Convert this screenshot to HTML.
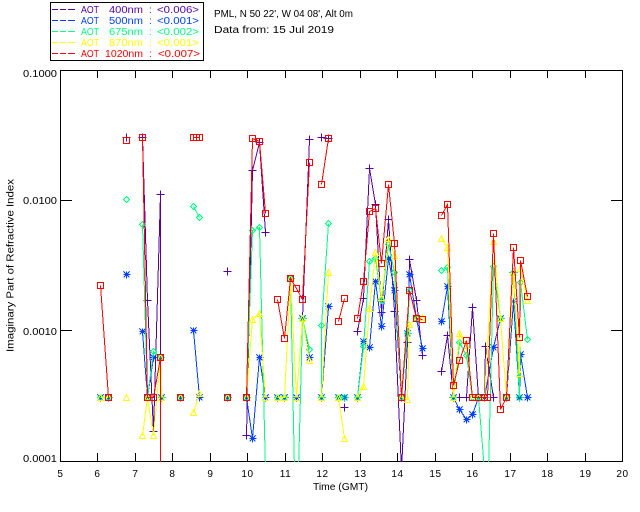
<!DOCTYPE html>
<html>
<head>
<meta charset="utf-8">
<style>
html,body{margin:0;padding:0;background:#fff;}
svg{display:block;}
text{font-family:"Liberation Sans",sans-serif;font-size:10px;fill:#000;}
.n{letter-spacing:.6px;}
</style>
</head>
<body>
<svg id="s" width="640" height="512" viewBox="0 0 640 512" xmlns="http://www.w3.org/2000/svg">
<defs><clipPath id="c"><rect x="60" y="70" width="563" height="392"/></clipPath></defs>
<rect x="0" y="0" width="640" height="512" fill="#fff"/>
<g id="axes" shape-rendering="crispEdges" stroke="#000" fill="none">
<rect x="50.5" y="2.5" width="153" height="58"/>
<rect x="60.5" y="70.5" width="562" height="391"/>
<path d="M61 200.5H72M61 330.5H72M622 200.5H611M622 330.5H611"/>
<path d="M97.5 70V78M135.5 70V78M172.5 70V78M210.5 70V78M247.5 70V78M285.5 70V78M322.5 70V78M360.5 70V78M397.5 70V78M435.5 70V78M472.5 70V78M510.5 70V78M547.5 70V78M585.5 70V78"/>
<path d="M97.5 461V453M135.5 461V453M172.5 461V453M210.5 461V453M247.5 461V453M285.5 461V453M322.5 461V453M360.5 461V453M397.5 461V453M435.5 461V453M472.5 461V453M510.5 461V453M547.5 461V453M585.5 461V453"/>
</g>
<g shape-rendering="crispEdges" fill="none">
<path d="M52 9.5H58M60 9.5H66M68 9.5H75" stroke="#5500a5"/>
<path d="M52 20.5H58M60 20.5H66M68 20.5H75" stroke="#0040ff"/>
<path d="M52 31.5H58M60 31.5H66M68 31.5H75" stroke="#00ff80"/>
<path d="M52 42.5H58M60 42.5H66M68 42.5H75" stroke="#ffff00"/>
<path d="M52 53.5H58M60 53.5H66M68 53.5H75" stroke="#ff0000"/>
</g>
<text x="81" y="13" textLength="18" lengthAdjust="spacingAndGlyphs" style="fill:#5500a5">AOT</text>
<text x="109" y="13" textLength="34" lengthAdjust="spacingAndGlyphs" style="fill:#5500a5">400nm</text>
<text x="149" y="13" style="fill:#5500a5">:</text>
<text x="157" y="13" textLength="42" lengthAdjust="spacingAndGlyphs" style="fill:#5500a5">&lt;0.006&gt;</text>
<text x="81" y="24" textLength="18" lengthAdjust="spacingAndGlyphs" style="fill:#0040ff">AOT</text>
<text x="109" y="24" textLength="34" lengthAdjust="spacingAndGlyphs" style="fill:#0040ff">500nm</text>
<text x="149" y="24" style="fill:#0040ff">:</text>
<text x="157" y="24" textLength="42" lengthAdjust="spacingAndGlyphs" style="fill:#0040ff">&lt;0.001&gt;</text>
<text x="81" y="35" textLength="18" lengthAdjust="spacingAndGlyphs" style="fill:#00ff80">AOT</text>
<text x="109" y="35" textLength="34" lengthAdjust="spacingAndGlyphs" style="fill:#00ff80">675nm</text>
<text x="149" y="35" style="fill:#00ff80">:</text>
<text x="157" y="35" textLength="42" lengthAdjust="spacingAndGlyphs" style="fill:#00ff80">&lt;0.002&gt;</text>
<text x="81" y="46" textLength="18" lengthAdjust="spacingAndGlyphs" style="fill:#ffff00">AOT</text>
<text x="109" y="46" textLength="34" lengthAdjust="spacingAndGlyphs" style="fill:#ffff00">870nm</text>
<text x="149" y="46" style="fill:#ffff00">:</text>
<text x="157" y="46" textLength="42" lengthAdjust="spacingAndGlyphs" style="fill:#ffff00">&lt;0.001&gt;</text>
<text x="81" y="57" textLength="18" lengthAdjust="spacingAndGlyphs" style="fill:#ff0000">AOT</text>
<text x="105" y="57" textLength="38" lengthAdjust="spacingAndGlyphs" style="fill:#ff0000">1020nm</text>
<text x="149" y="57" style="fill:#ff0000">:</text>
<text x="158" y="57" textLength="42" lengthAdjust="spacingAndGlyphs" style="fill:#ff0000">&lt;0.007&gt;</text>

<text x="214" y="17" textLength="139" lengthAdjust="spacingAndGlyphs">PML, N 50 22', W 04 08', Alt 0m</text>
<text x="214" y="33" textLength="120" lengthAdjust="spacingAndGlyphs">Data from: 15 Jul 2019</text>

<text x="23" y="77" textLength="34" lengthAdjust="spacingAndGlyphs">0.1000</text>
<text x="23" y="204" textLength="34" lengthAdjust="spacingAndGlyphs">0.0100</text>
<text x="23" y="335" textLength="34" lengthAdjust="spacingAndGlyphs">0.0010</text>
<text x="23" y="462" textLength="34" lengthAdjust="spacingAndGlyphs">0.0001</text>

<g text-anchor="middle" class="n">
<text x="60.5" y="477">5</text><text x="97.5" y="477">6</text><text x="135.5" y="477">7</text><text x="172.5" y="477">8</text>
<text x="210.5" y="477">9</text><text x="247.5" y="477">10</text><text x="285.5" y="477">11</text><text x="322.5" y="477">12</text>
<text x="360.5" y="477">13</text><text x="397.5" y="477">14</text><text x="435.5" y="477">15</text><text x="472.5" y="477">16</text>
<text x="510.5" y="477">17</text><text x="547.5" y="477">18</text><text x="585.5" y="477">19</text><text x="622.5" y="477">20</text>
</g>
<text x="313" y="490" textLength="55" lengthAdjust="spacingAndGlyphs">Time (GMT)</text>
<text transform="translate(13.5,352) rotate(-90)" x="0" y="0" textLength="173" lengthAdjust="spacingAndGlyphs">Imaginary Part of Refractive Index</text>

<g id="plot" clip-path="url(#c)" shape-rendering="crispEdges" fill="none"></g>
</svg>
<script>
var R=397.3;
var series=[
{c:"#5500a5",m:"plus",lines:[
[[142.3,137],[147.3,300],[153.3,431],[160.3,194],[160.3,357]],
[[246.3,435],[252.3,170],[259.3,142.7],[265.3,232.7]],
[[302.3,318],[309.3,139.3]],
[[321.3,137.3],[328.3,138]],
[[344.3,407]],
[[357.3,331],[363.3,298],[369.3,168],[375.3,204],[381.3,312],[388.3,219],[394.3,311],[401.3,470],[407.3,342],[409.3,259],[416.3,300],[422.3,355]],
[[441.3,371],[447.3,335],[453.3,R],[459.3,R],[466.3,R],[472.3,307],[478.3,R],[484.3,R],[485.3,346],[493.3,R]],
[[513.3,272]],
[[126.3,137]],[[227.3,271]]
]},
{c:"#0040ff",m:"star",lines:[
[[100.3,R],[108.3,R]],[[126.3,274]],
[[142.3,331],[147.3,R],[153.3,357],[160.3,357],[161.7,R]],[[180.3,R]],
[[193.3,330],[199.3,R]],
[[227.3,R]],[[246.3,R],[252.3,438],[259.3,357],[265.3,R]],
[[277.3,R],[284.3,R],[290.3,278],[296.3,R],[302.3,318],[309.3,357]],
[[321.7,R],[328.3,306]],
[[338.3,R],[344.3,R]],
[[357.3,R],[363.3,341],[369.3,347],[375.3,281],[381.3,326],[388.3,258],[394.3,290],[401.3,R],[407.3,333],[409.3,274],[416.3,318],[422.3,348]],
[[441.3,321],[447.3,286],[453.3,R],[459.3,409],[466.3,419],[472.3,414],[478.3,R],[484.3,R],[493.3,347],[500.3,318],[506.3,R],[513.3,301],[519.3,R],[520.3,354],[527.3,R]]
]},
{c:"#00ff80",m:"dia",lines:[
[[100.3,R],[108.3,R]],[[126.3,199]],
[[142.3,224],[147.3,R],[153.3,351],[160.3,357],[161.7,R]],[[180.3,R]],
[[193.3,206],[199.3,217]],
[[227.3,R]],[[246.3,R],[252.3,230],[259.3,227],[265.5,470]],
[[277.3,R],[284.3,R],[290.3,278],[294,470]],[[298.3,470],[302.3,318],[309.3,349]],
[[321.7,325],[328.3,223]],[[321.7,R],[321.7,325]],
[[338.3,R],[344.3,R]],
[[357.3,R],[363.3,346],[369.3,261],[375.3,258],[381.3,300],[388.3,244],[394.3,272],[401.3,R],[407.3,333],[409.3,290],[416.3,318]],
[[441.3,270],[447.3,267],[453.3,R],[459.3,342],[466.3,355],[472.3,R],[478.3,R],[484.3,470]],[[488.3,470],[493.3,266],[500.3,318],[506.3,R],[513.3,272],[519.3,R],[520.3,282],[527.3,339]]
]},
{c:"#ffff00",m:"tri",lines:[
[[100.3,R],[108.3,R]],[[126.3,R]],
[[142.3,435],[147.3,R],[153.3,435],[160.3,357],[161.7,R]],[[180.3,R]],
[[193.3,412],[199.3,393]],
[[227.3,R]],[[246.3,R],[252.3,319],[259.3,313],[265.3,R]],
[[277.3,R],[284.3,R],[290.3,278],[296.3,R],[302.3,318],[309.3,360]],
[[321.7,R],[328.3,272]],
[[338.3,R],[344.3,438]],
[[357.3,R],[363.3,386],[369.3,308],[375.3,252],[381.3,297],[388.3,238],[394.3,255],[401.3,R],[407.3,399],[409.3,324],[416.3,318],[422.3,317]],
[[441.3,238],[447.3,247],[453.3,R],[459.3,333],[466.3,345],[472.3,R],[478.3,R],[484.3,R],[493.3,241],[500.3,318],[506.3,R],[513.3,272],[519.3,373],[520.3,268],[527.3,300]]
]},
{c:"#ff0000",m:"sq",lines:[
[[100.3,285],[108.3,R]],[[126.3,140]],
[[142.3,137],[147.3,R],[153.3,R],[160.3,357],[160.3,470]],[[180.3,R]],
[[193.3,137],[196.3,137],[199.3,137]],
[[227.3,R]],[[246.3,R],[252.3,138],[259.3,141],[265.3,213]],
[[277.3,299],[284.3,338],[290.3,278],[296.3,288],[302.3,299],[309.3,162]],
[[321.3,184],[328.3,138]],
[[338.3,321],[344.3,298]],
[[357.3,318],[363.3,281],[369.3,211],[375.3,208],[381.3,263],[388.3,184],[394.3,243],[401.3,R],[409.3,290],[416.3,318],[422.3,319]],
[[441.3,215],[447.3,204],[453.3,385],[459.3,360],[466.3,340],[472.3,R],[478.3,R],[484.3,R],[487.3,R],[493.3,233],[500.3,409],[506.3,R],[513.3,247],[519.3,337],[520.3,260],[527.3,296]]
]}
];
var marks={
plus:function(x,y){return "M"+(x-4)+" "+y+"H"+(x+4)+"M"+x+" "+(y-4)+"V"+(y+4);},
star:function(x,y){return "M"+(x-3)+" "+y+"H"+(x+4)+"M"+x+" "+(y-3)+"V"+(y+4)+"M"+(x-3)+" "+(y-3)+"L"+(x+3)+" "+(y+3)+"M"+(x-3)+" "+(y+3)+"L"+(x+3)+" "+(y-3)+"M"+(x-1)+" "+(y-1)+"H"+(x+2)+"M"+(x-1)+" "+(y+1)+"H"+(x+2);},
dia:function(x,y){return "M"+x+" "+(y-3)+"L"+(x+3)+" "+y+"L"+x+" "+(y+3)+"L"+(x-3)+" "+y+"Z";},
tri:function(x,y){return "M"+x+" "+(y-3)+"L"+(x+3)+" "+(y+3)+"H"+(x-3)+"Z";},
sq:function(x,y){return "M"+(x-3)+" "+(y-3)+"H"+(x+3)+"V"+(y+3)+"H"+(x-3)+"Z";}
};
var h="";
series.forEach(function(s){
  var d="";
  s.lines.forEach(function(l){
    var q=l.map(function(p){return [Math.floor(p[0])+0.5,Math.floor(p[1])+0.5];});
    if(q.length>1){d+="M"+q.map(function(p){return p[0]+" "+p[1];}).join("L");}
    q.forEach(function(p){if(p[1]<465){d+=marks[s.m](p[0],p[1]);}});
  });
  h+='<path d="'+d+'" stroke="'+s.c+'" stroke-width="1"/>';
});
document.getElementById("plot").innerHTML=h;
</script>
</body>
</html>
